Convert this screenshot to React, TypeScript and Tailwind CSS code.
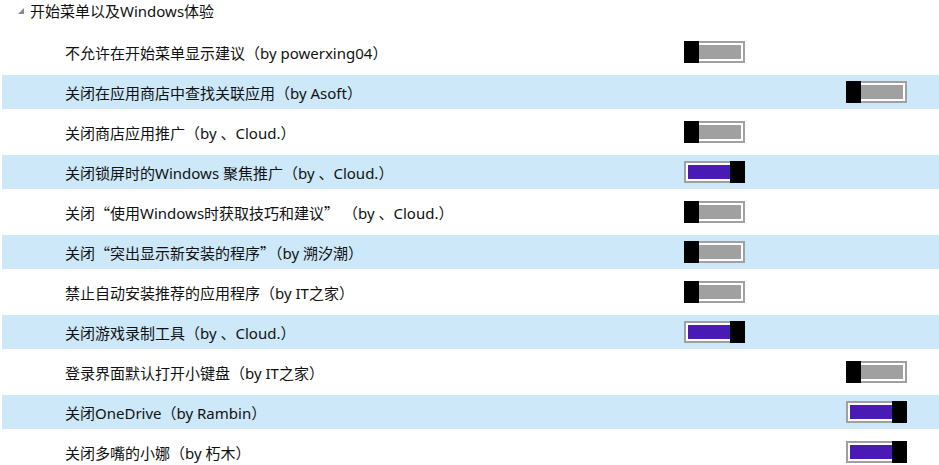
import React from 'react'

type Row = { label: string; slot: 'a' | 'b'; on: boolean }

const ROWS: Row[] = [
  { label: '不允许在开始菜单显示建议（by powerxing04）', slot: 'a', on: false },
  { label: '关闭在应用商店中查找关联应用（by Asoft）', slot: 'b', on: false },
  { label: '关闭商店应用推广（by 、Cloud.）', slot: 'a', on: false },
  { label: '关闭锁屏时的Windows 聚焦推广（by 、Cloud.）', slot: 'a', on: true },
  { label: '关闭“使用Windows时获取技巧和建议” （by 、Cloud.）', slot: 'a', on: false },
  { label: '关闭“突出显示新安装的程序”（by 溯汐潮）', slot: 'a', on: false },
  { label: '禁止自动安装推荐的应用程序（by IT之家）', slot: 'a', on: false },
  { label: '关闭游戏录制工具（by 、Cloud.）', slot: 'a', on: true },
  { label: '登录界面默认打开小键盘（by IT之家）', slot: 'b', on: false },
  { label: '关闭OneDrive（by Rambin）', slot: 'b', on: true },
  { label: '关闭多嘴的小娜（by 朽木）', slot: 'b', on: true },
]

// curly quotes should render full-width, like the CJK UI font does
function Label({ text }: { text: string }) {
  const parts = text.split(/([“”])/)
  return (
    <>
      {parts.map((p, i) =>
        p === '“' || p === '”' ? (
          <span key={i} className="font-['Noto_Sans_CJK_SC',sans-serif]">{p}</span>
        ) : (
          <span key={i}>{p}</span>
        ),
      )}
    </>
  )
}

function Toggle({ on }: { on: boolean }) {
  return (
    <div className="relative w-[61px] h-[22px]">
      <div className="absolute inset-0 border-2 border-[#a0a0a0] bg-white p-[2px]">
        <div className={`w-full h-full ${on ? 'bg-[#4a1ab5]' : 'bg-[#a0a0a0]'}`} />
      </div>
      <div className={`absolute top-0 bottom-0 w-[15px] bg-black ${on ? 'right-0' : 'left-0'}`} />
    </div>
  )
}

export default function App() {
  return (
    <div className="w-[939px] h-[465px] bg-white overflow-hidden text-[15px] text-[#111] font-['Noto_Sans','Noto_Sans_CJK_SC',sans-serif]">
      <div className="h-[32px] flex items-start pt-[1px]">
        <div className="w-[30px] h-[20px] flex items-center justify-end pr-[6px]">
          <svg width="6" height="6" viewBox="0 0 6 6">
            <polygon points="6,0 6,6 0,6" fill="#8a8a8a" />
          </svg>
        </div>
        <span className="leading-[20px]">开始菜单以及Windows体验</span>
      </div>

      {ROWS.map((row, i) => (
        <div key={i} className="h-[40px] py-[3px] pl-[2px]">
          <div className={`h-full flex items-center ${i % 2 === 1 ? 'bg-[#cce8f9]' : ''}`}>
            <div className="w-[682px] pl-[63px] pt-[2px] whitespace-pre leading-[20px]">
              <Label text={row.label} />
            </div>
            <div className="w-[162px] flex items-center">
              {row.slot === 'a' && <Toggle on={row.on} />}
            </div>
            <div className="flex items-center">
              {row.slot === 'b' && <Toggle on={row.on} />}
            </div>
          </div>
        </div>
      ))}
    </div>
  )
}
